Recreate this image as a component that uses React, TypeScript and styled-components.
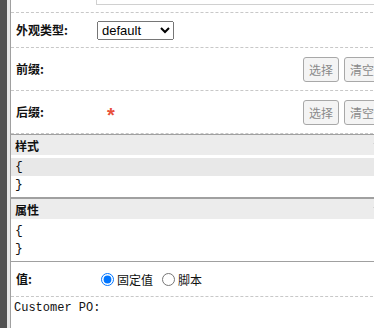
import {FC, ReactNode} from 'react';
import styled, {createGlobalStyle} from 'styled-components';

const GlobalStyle = createGlobalStyle`
  body {
    margin: 0;
    background: #fff;
    font-family: "Noto Sans CJK SC", "Liberation Sans", sans-serif;
    font-size: 12px;
    color: #111;
  }
`;

const ChevronIcon: FC = () => (
  <svg width="10" height="10" viewBox="0 0 10 10">
    <path d="M1 3 L5 7 L9 3" fill="none" stroke="#999" strokeWidth="1.5" />
  </svg>
);

interface SectionProps {
  title: string;
  lines: string[];
  activeLine?: number;
}

const CodeSection: FC<SectionProps> = ({title, lines, activeLine}) => (
  <Section>
    <SectionHeader>
      <span>{title}</span>
      <ChevronIcon />
    </SectionHeader>
    <CodeBody>
      {lines.map((line, i) => (
        <CodeLine key={i} $active={i === activeLine}>
          {line}
        </CodeLine>
      ))}
    </CodeBody>
  </Section>
);

const PickButtons: FC = () => (
  <ButtonGroup>
    <SmallButton>选择</SmallButton>
    <SmallButton>清空</SmallButton>
  </ButtonGroup>
);

const Field: FC<{label: string; height: number; children?: ReactNode}> = ({label, height, children}) => (
  <FieldRow $h={height}>
    <Label>{label}</Label>
    <Value>{children}</Value>
  </FieldRow>
);

const App: FC = () => (
  <Page>
    <GlobalStyle />
    <SideStrip />
    <SideGap />
    <Panel>
      <TitleRow>
        <Label>标题:</Label>
        <TitleInput />
      </TitleRow>
      <Field label="外观类型:" height={34}>
        <Select defaultValue="default">
          <option value="default">default</option>
        </Select>
      </Field>
      <Field label="前缀:" height={42}>
        <PickButtons />
      </Field>
      <Field label="后缀:" height={42}>
        <Required>*</Required>
        <PickButtons />
      </Field>
      <CodeSection title="样式" lines={['{', '}']} activeLine={0} />
      <CodeSection title="属性" lines={['{', '}']} />
      <Field label="值:" height={34}>
        <RadioLabel>
          <input type="radio" name="valueType" defaultChecked />
          固定值
        </RadioLabel>
        <RadioLabel>
          <input type="radio" name="valueType" />
          脚本
        </RadioLabel>
      </Field>
      <ValueText>Customer PO:</ValueText>
    </Panel>
  </Page>
);

const Page = styled.div`
  display: flex;
  width: 374px;
  height: 328px;
  overflow: hidden;
`;

const SideStrip = styled.div`
  flex: none;
  width: 7px;
  background: #505050;
`;

const SideGap = styled.div`
  flex: none;
  width: 3px;
  background: #e4e4e4;
`;

const Panel = styled.div`
  flex: none;
  box-sizing: border-box;
  width: 378px;
  border-left: 1px solid #a0a0a0;
  display: flex;
  flex-direction: column;
  background: #fff;
`;

// the form is scrolled: only the bottom edge of the title row shows
const TitleRow = styled.div`
  flex: none;
  height: 12px;
  overflow: hidden;
  display: flex;
  align-items: flex-end;
  padding-left: 5px;
  border-bottom: 1px dashed #c8c8c8;

  & > span {
    margin-bottom: 11px;
  }
`;

const TitleInput = styled.div`
  flex: 1;
  height: 20px;
  margin-bottom: 7px;
  border: 1px solid #d0d0d0;
`;

const FieldRow = styled.div<{$h: number}>`
  flex: none;
  height: ${({$h}) => $h}px;
  display: flex;
  align-items: center;
  padding-left: 5px;
  border-bottom: 1px dashed #c8c8c8;
`;

const Label = styled.span`
  flex: none;
  width: 80px;
  font-weight: 700;
  font-size: 12px;
  line-height: 16px;
`;

const Value = styled.div`
  flex: 1;
  display: flex;
  align-items: center;
  min-width: 0;
`;

const Select = styled.select`
  width: 77px;
  height: 19px;
  margin-left: 1px;
  font-family: "Liberation Sans", Arial, sans-serif;
  font-size: 13px;
  color: #000;
`;

const Required = styled.span`
  margin-left: 11px;
  margin-top: 5px;
  color: #e8503a;
  font-family: "Liberation Sans", Arial, sans-serif;
  font-size: 20px;
  font-weight: 700;
  line-height: 16px;
`;

const ButtonGroup = styled.div`
  margin-left: auto;
  display: flex;
  gap: 5px;
  padding-right: 8px;
`;

const SmallButton = styled.button`
  box-sizing: border-box;
  width: 36px;
  height: 25px;
  padding: 0;
  border: 1px solid #a8a8a8;
  border-radius: 3px;
  background: #f4f4f4;
  color: #8a8a8a;
  font-family: "Noto Sans CJK SC", sans-serif;
  font-size: 12px;
`;

const Section = styled.div`
  flex: none;
  border-top: 1px solid #a0a0a0;
  border-bottom: 1px solid #a0a0a0;
`;

const SectionHeader = styled.div`
  height: 20px;
  display: flex;
  align-items: center;
  justify-content: space-between;
  padding: 0 5px 0 4px;
  background: #ececec;
  font-weight: 700;
  font-size: 12px;
`;

const CodeBody = styled.div`
  padding: 3px 0;
`;

const CodeLine = styled.div<{$active: boolean}>`
  height: 18px;
  line-height: 18px;
  padding-left: 4px;
  font-family: "Liberation Mono", monospace;
  font-size: 13px;
  background: ${({$active}) => ($active ? '#e8e8e8' : 'transparent')};
`;

const RadioLabel = styled.label`
  display: flex;
  align-items: center;
  margin-right: 4px;
  font-size: 12px;

  input {
    margin: 0 3px 0 5px;
    width: 13px;
    height: 13px;
  }
`;

const ValueText = styled.div`
  flex: 1;
  padding: 2px 3px;
  font-family: "Liberation Mono", monospace;
  font-size: 12px;
  line-height: 18px;
`;

export default App;
